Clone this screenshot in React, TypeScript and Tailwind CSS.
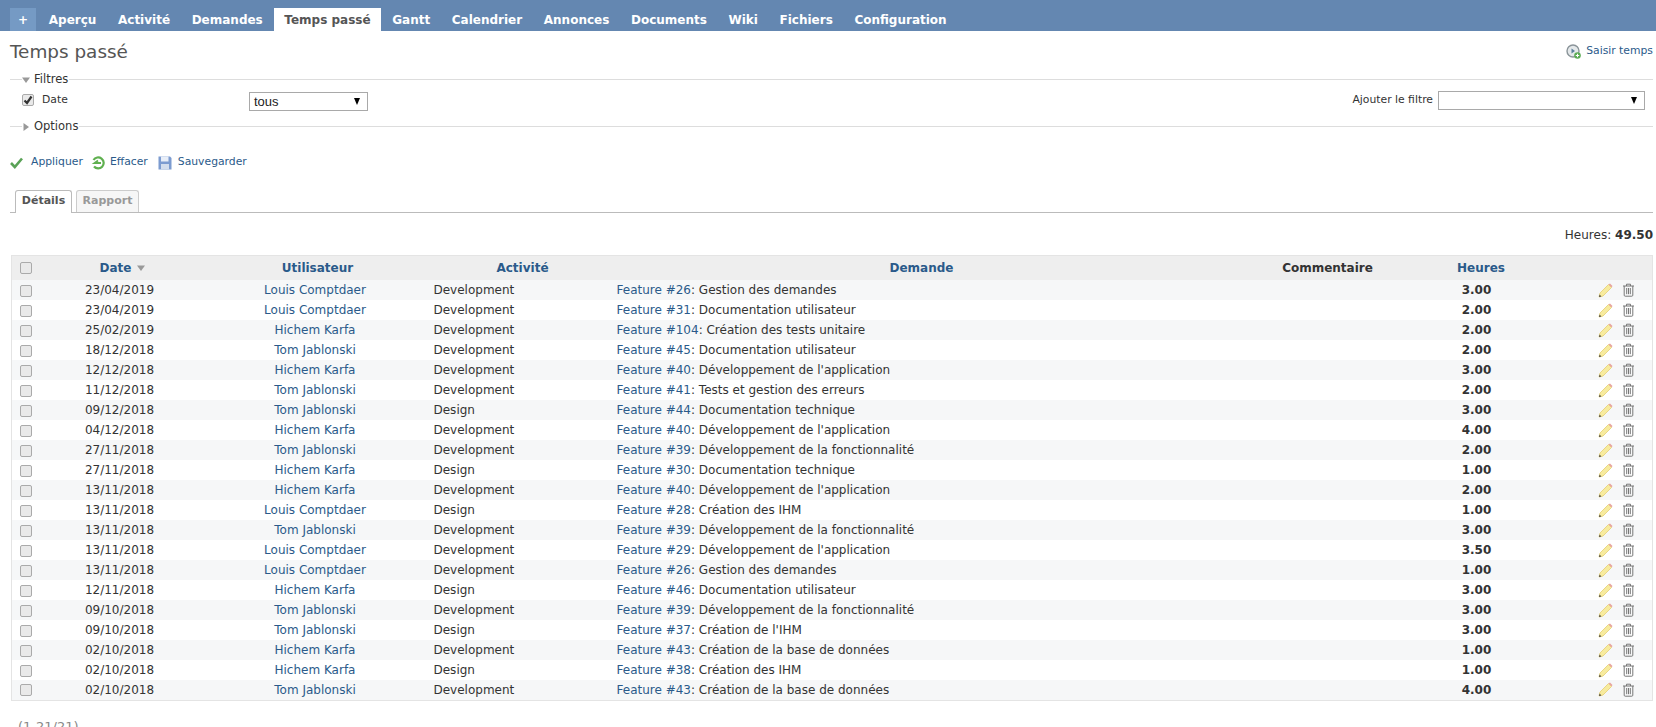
const tabs = ["Aperçu", "Activité", "Demandes", "Temps passé", "Gantt", "Calendrier", "Annonces", "Documents", "Wiki", "Fichiers", "Configuration"];

const LOUIS = "Louis Comptdaer";
const HICHEM = "Hichem Karfa";
const TOM = "Tom Jablonski";
const DEV = "Development";

const rows = [
  ["23/04/2019", LOUIS, DEV, "Feature #26", "Gestion des demandes", "3.00"],
  ["23/04/2019", LOUIS, DEV, "Feature #31", "Documentation utilisateur", "2.00"],
  ["25/02/2019", HICHEM, DEV, "Feature #104", "Création des tests unitaire", "2.00"],
  ["18/12/2018", TOM, DEV, "Feature #45", "Documentation utilisateur", "2.00"],
  ["12/12/2018", HICHEM, DEV, "Feature #40", "Développement de l'application", "3.00"],
  ["11/12/2018", TOM, DEV, "Feature #41", "Tests et gestion des erreurs", "2.00"],
  ["09/12/2018", TOM, "Design", "Feature #44", "Documentation technique", "3.00"],
  ["04/12/2018", HICHEM, DEV, "Feature #40", "Développement de l'application", "4.00"],
  ["27/11/2018", TOM, DEV, "Feature #39", "Développement de la fonctionnalité", "2.00"],
  ["27/11/2018", HICHEM, "Design", "Feature #30", "Documentation technique", "1.00"],
  ["13/11/2018", HICHEM, DEV, "Feature #40", "Développement de l'application", "2.00"],
  ["13/11/2018", LOUIS, "Design", "Feature #28", "Création des IHM", "1.00"],
  ["13/11/2018", TOM, DEV, "Feature #39", "Développement de la fonctionnalité", "3.00"],
  ["13/11/2018", LOUIS, DEV, "Feature #29", "Développement de l'application", "3.50"],
  ["13/11/2018", LOUIS, DEV, "Feature #26", "Gestion des demandes", "1.00"],
  ["12/11/2018", HICHEM, "Design", "Feature #46", "Documentation utilisateur", "3.00"],
  ["09/10/2018", TOM, DEV, "Feature #39", "Développement de la fonctionnalité", "3.00"],
  ["09/10/2018", TOM, "Design", "Feature #37", "Création de l'IHM", "3.00"],
  ["02/10/2018", HICHEM, DEV, "Feature #43", "Création de la base de données", "1.00"],
  ["02/10/2018", HICHEM, "Design", "Feature #38", "Création des IHM", "1.00"],
  ["02/10/2018", TOM, DEV, "Feature #43", "Création de la base de données", "4.00"],
];

const Checkbox = ({ checked }: { checked?: boolean }) => (
  <span className="relative inline-block w-3 h-3 rounded-[2px] border border-[#aaa] bg-[#e9e9e9] align-middle">
    {checked && (
      <svg className="absolute left-0 top-0 w-[10px] h-[10px]" viewBox="0 0 10 10">
        <path d="M1.5 5.5 L4 8 L8.5 1.5" fill="none" stroke="#333" strokeWidth="2.2" />
      </svg>
    )}
  </span>
);

const Pencil = () => (
  <svg className="w-[15px] h-[15px]" viewBox="0 0 15 15">
    <path d="M1 14 L2 10 L10.5 1.5 L13.5 4.5 L5 13 Z" fill="#f7eb9e" stroke="#e6cf70" strokeWidth="0.8" />
    <path d="M10.5 1.5 L12 0.5 L14.5 3 L13.5 4.5 Z" fill="#e8a5a0" />
    <path d="M1 14 L1.6 11.6 L3.4 13.4 Z" fill="#444" />
  </svg>
);

const Trash = () => (
  <svg className="w-[13px] h-[14px]" viewBox="0 0 13 14" fill="none" stroke="#777" strokeWidth="1">
    <path d="M1 3 H12 M4.5 3 V1.2 H8.5 V3" />
    <path d="M2.2 3 V12.2 Q2.2 13.2 3.2 13.2 H9.8 Q10.8 13.2 10.8 12.2 V3" />
    <path d="M4.7 5 V11.2 M6.5 5 V11.2 M8.3 5 V11.2" />
  </svg>
);

const Triangle = ({ open }: { open?: boolean }) => (
  <svg className="w-2 h-2" viewBox="0 0 8 8">
    <path d={open ? "M0 1.5 H8 L4 7 Z" : "M1.5 0 V8 L7 4 Z"} fill="#999" />
  </svg>
);

const SelectBox = ({ value, className }: { value?: string; className: string }) => (
  <div className={`flex items-center justify-between border border-[#a9a9a9] bg-white pl-[4px] pr-[7px] text-[13px] text-[#222] font-['Liberation_Sans',sans-serif] ${className}`}>
    <span>{value}</span>
    <span className="w-0 h-0 border-x-[3.5px] border-x-transparent border-t-[7px] border-t-black" />
  </div>
);

export default function App() {
  return (
    <div className="h-[727px] overflow-hidden bg-white text-[12px] text-[#333] font-['DejaVu_Sans',Verdana,sans-serif]">
      <div className="flex h-[31px] items-end bg-[#6487b1] pl-[10px] font-bold text-[12px] text-white">
        <a className="mr-[2px] flex h-[23px] w-[26px] items-center justify-center bg-[#759ac4]">+</a>
        {tabs.map((tab) => (
          <a
            key={tab}
            className={`flex h-[23px] items-center px-[10.8px] ${tab === "Temps passé" ? "bg-white text-[#555]" : ""}`}
          >
            {tab}
          </a>
        ))}
      </div>

      <div className="px-[10px]">
        <div className="flex h-[41px] items-center justify-between">
          <h2 className="text-[18.4px] text-[#555] font-normal">Temps passé</h2>
          <a className="mr-[-7px] flex items-center gap-[5px] text-[10.8px] text-[#2a5a8a]">
            <svg className="w-[15px] h-[15px]" viewBox="0 0 15 15">
              <circle cx="7" cy="7" r="6" fill="#e4e8ea" stroke="#8a9499" strokeWidth="1.4" />
              <path d="M5.5 4.5 L9 7 L5.5 9.5 Z" fill="#5a7f9c" />
              <circle cx="11.5" cy="11.5" r="3.3" fill="#5cab55" />
              <path d="M9.8 11.5 H13.2 M11.5 9.8 V13.2" stroke="#fff" strokeWidth="1" />
            </svg>
            Saisir temps
          </a>
        </div>

        <fieldset className="border-t border-[#ddd] mt-[-1px] mr-[-7px] pl-[12px] pb-[6px]">
          <legend className="flex items-center gap-[4px] pr-[1px] text-[11.5px]">
            <Triangle open />
            Filtres
          </legend>
          <div className="flex h-[24px] items-center justify-between">
            <div className="flex items-center">
              <Checkbox checked />
              <span className="ml-[8px] w-[207px] text-[10.8px]">Date</span>
              <SelectBox value="tous" className="h-[19px] w-[119px] mt-[2px]" />
            </div>
            <div className="flex items-center mr-[8px]">
              <span className="mr-[5px] text-[10.8px]">Ajouter le filtre</span>
              <SelectBox className="h-[19px] w-[207px]" />
            </div>
          </div>
        </fieldset>

        <fieldset className="border-t border-[#ddd] mr-[-7px]">
          <legend className="ml-[12px] flex items-center gap-[4px] pr-[1px] text-[11.5px]">
            <Triangle />
            Options
          </legend>
        </fieldset>

        <div className="mt-[17px] flex h-[20px] items-center text-[10.8px] text-[#2a5a8a]">
          <svg className="w-[13px] h-[13px]" viewBox="0 0 13 13">
            <path d="M1 7 L4.8 11 L12 2.5" fill="none" stroke="#5aa257" strokeWidth="2.6" />
          </svg>
          <span className="ml-[8px]">Appliquer</span>
          <svg className="ml-[8px] w-[14px] h-[14px]" viewBox="0 0 14 14" fill="none" stroke="#5fb04f" strokeWidth="2.2">
            <path d="M2.5 4 A5.5 5.5 0 1 1 3 10.5" />
            <path d="M7 4.5 L3.5 7 H10" strokeWidth="1.8" />
          </svg>
          <span className="ml-[5px]">Effacer</span>
          <svg className="ml-[10px] w-[14px] h-[14px]" viewBox="0 0 14 14">
            <path d="M0.5 0.5 H12 L13.5 2 V13.5 H0.5 Z" fill="#7c9bd0" />
            <rect x="3" y="0.5" width="7.5" height="5" fill="#e8eef8" />
            <rect x="3" y="8" width="8" height="5.5" fill="#d3dded" />
          </svg>
          <span className="ml-[6px]">Sauvegarder</span>
        </div>

        <div className="mt-[17px] mr-[-7px] flex h-[23px] items-end gap-[4px] border-b border-[#bbb] pl-[5px] text-[11px] font-bold">
          <a className="mb-[-1px] flex h-[23px] w-[57px] items-center justify-center rounded-t-[3px] border border-b-0 border-[#bbb] bg-white text-[#555]">
            Détails
          </a>
          <a className="flex h-[22px] w-[63px] items-center justify-center rounded-t-[3px] border border-b-0 border-[#ccc] bg-[#f6f6f6] text-[#999]">
            Rapport
          </a>
        </div>

        <p className="mt-[13px] mr-[-7px] text-right">
          Heures: <span className="font-bold">49.50</span>
        </p>

        <table className="mt-[11px] ml-[1px] w-[1641px] table-fixed border border-[#e4e4e4]">
          <colgroup>
            <col className="w-[27px]" />
            <col className="w-[162px]" />
            <col className="w-[232px]" />
            <col className="w-[180px]" />
            <col className="w-[618px]" />
            <col className="w-[194px]" />
            <col className="w-[106px]" />
            <col className="w-[122px]" />
          </colgroup>
          <thead>
            <tr className="h-[25px] bg-[#eeeeee] text-[#2a5a8a] font-bold">
              <th className="pl-[8px] text-left"><Checkbox /></th>
              <th className="pl-[6px]">
                <span className="inline-flex items-center gap-[6px]">
                  Date
                  <Triangle open />
                </span>
              </th>
              <th className="pl-[2px]">Utilisateur</th>
              <th>Activité</th>
              <th>Demande</th>
              <th className="text-[#333]">Commentaire</th>
              <th className="pl-[7px]">Heures</th>
              <th />
            </tr>
          </thead>
          <tbody>
            {rows.map((row, i) => (
              <tr key={i} className={`h-[20px] ${i % 2 === 0 ? "bg-[#f6f7f8]" : "bg-white"}`}>
                <td className="pl-[8px]"><Checkbox /></td>
                <td className="text-center">{row[0]}</td>
                <td className="text-center text-[#2a5a8a] pr-[3px]">{row[1]}</td>
                <td className="pl-[1px]">{row[2]}</td>
                <td className="pl-[4px]">
                  <a className="text-[#2a5a8a]">{row[3]}</a>: {row[4]}
                </td>
                <td />
                <td className="text-center font-bold pr-[2px]">{row[5]}</td>
                <td>
                  <div className="ml-[67px] flex items-center gap-[9px]">
                    <Pencil />
                    <Trash />
                  </div>
                </td>
              </tr>
            ))}
          </tbody>
        </table>

        <p className="mt-[16px] ml-[8px] text-[13px] text-[#888]">(1-21/21)</p>
      </div>
    </div>
  );
}
